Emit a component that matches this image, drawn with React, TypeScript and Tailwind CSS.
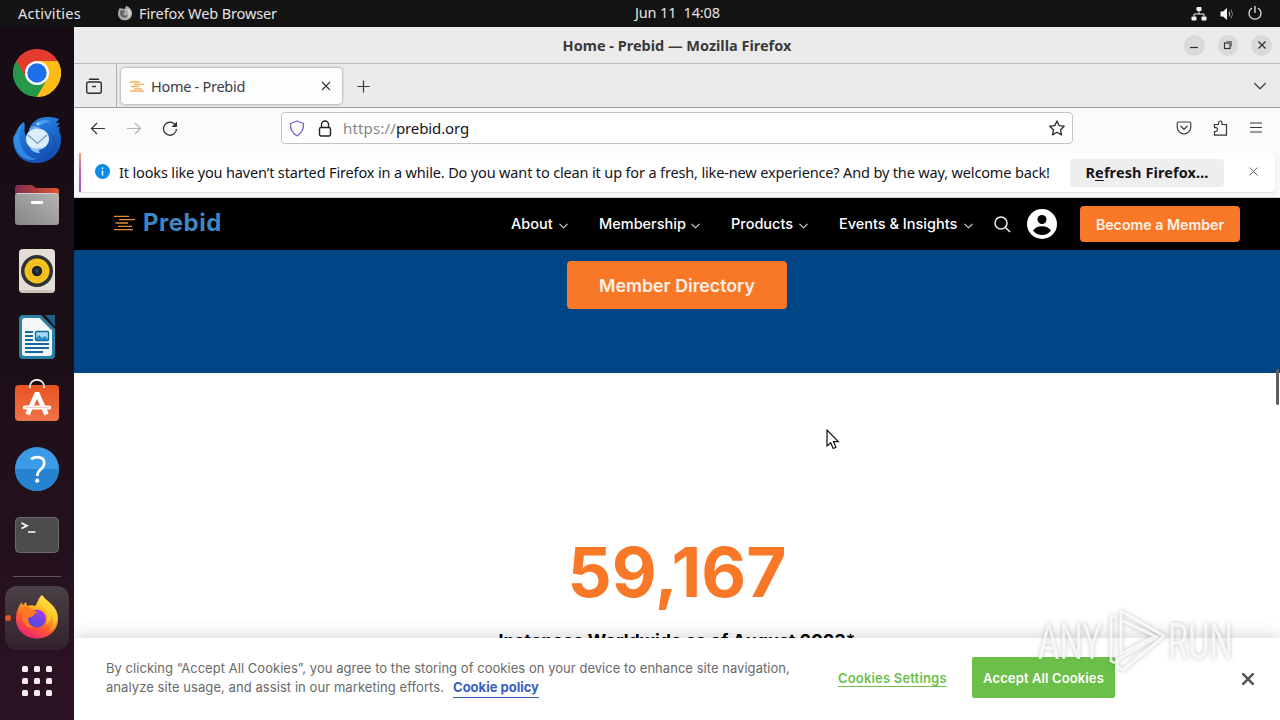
import React from 'react'

const UI_FONT = "font-['Noto_Sans',sans-serif]"

function ChromeIcon() {
    return (
        <svg width="48" height="48" viewBox="0 0 48 48">
            <path d="M24 24 L3.2 12 A24 24 0 0 1 44.8 12 Z" fill="#e33b2e" />
            <path d="M24 24 L44.8 12 A24 24 0 0 1 24 48 Z" fill="#fdbd16" />
            <path d="M24 24 L24 48 A24 24 0 0 1 3.2 12 Z" fill="#279847" />
            <path d="M24 12 H44.8 L34.4 30 Z" fill="#fdbd16" />
            <path d="M34.4 30 L24 48 L13.6 30 Z" fill="#279847" />
            <path d="M13.6 30 L3.2 12 L24 12 Z" fill="#e33b2e" />
            <path d="M3.2 12 L13.6 30 L12 34 L0.6 24 Z" fill="#279847" />
            <path d="M34.4 30 L24 48 L32 47 L42 36 L46 24 Z" fill="#fdbd16" />
            <circle cx="24" cy="24" r="12" fill="#fff" />
            <circle cx="24" cy="24" r="9.7" fill="#1b6fe8" />
        </svg>
    )
}

function ThunderbirdIcon() {
    return (
        <svg className="mt-px" width="48" height="48" viewBox="0 0 48 48">
            <defs>
                <linearGradient id="tbBody" x1="0" y1="0" x2="0.5" y2="1">
                    <stop offset="0" stopColor="#2d8ff0" />
                    <stop offset="1" stopColor="#1350b4" />
                </linearGradient>
            </defs>
            <path d="M11 6 C5 10 5 15 4 17 C2 18 1 20 0 22 C0 37 9 47 23 47 C38 47 48 37 48 23 C48 20 47 17 46 14 L47 11 L44 11 L47 7 L43 7 L46 3 C40 0 27 0 22 5 C18 8 17 11 16 14 L13 20 C10 15 13 11 11 6 Z" fill="url(#tbBody)" />
            <path d="M11 6 C6 12 5 22 8 30 C11 38 17 42 24 43 C16 46 5 42 2 30 C-1 19 5 10 11 6 Z" fill="#3b9cf2" opacity="0.65" />
            <path d="M36 17 C42 22 42 32 35 38 C32 41 28 42 24 42 C35 44 43 37 43 26 C42 21 39 17 36 17Z" fill="#0e459f" opacity="0.3" />
            <path d="M22 8 C27 3 34 3 38 6 C32 6 29 9 26 10 Z" fill="#61b5fa" opacity="0.6" />
            <path d="M16 14 C19 8 24 10 27 12 L18 17 Z" fill="#6fa9ea" />
            <ellipse cx="24.500" cy="23" rx="11.500" ry="10.500" fill="#d9eefc" />
            <path d="M15 19 L24.500 27.500 L34 19" fill="none" stroke="#7d99b5" strokeWidth="1.300" />
            <path d="M17 31 C22 34 27 32 29 31 C26 34 25 35 27 37 C22 37 18 35 17 31Z" fill="#8fc1ee" />
            <circle cx="25" cy="8" r="1.200" fill="#bfe2ff" />
        </svg>
    )
}

function FilesIcon() {
    return (
        <svg width="48" height="48" viewBox="0 0 48 48">
            <defs>
                <linearGradient id="flTab" x1="0" x2="1">
                    <stop offset="0" stopColor="#7c2d4d" />
                    <stop offset="1" stopColor="#e5532a" />
                </linearGradient>
                <linearGradient id="flBody" x1="0" y1="1" x2="1" y2="0">
                    <stop offset="0" stopColor="#858585" />
                    <stop offset="1" stopColor="#b5b5b5" />
                </linearGradient>
            </defs>
            <path d="M5 4 H18 Q20 4 21 5.500 Q22 7 24 7 H43 Q46 7 46 10 V24 H2 V7 Q2 4 5 4Z" fill="url(#flTab)" />
            <rect x="2" y="12" width="44" height="32" rx="3" fill="url(#flBody)" />
            <path d="M4 12.500 H44" stroke="#cfcfcf" strokeWidth="1" />
            <rect x="18" y="20" width="12" height="3" rx="1" fill="#fff" />
        </svg>
    )
}

function MusicIcon() {
    return (
        <svg width="48" height="48" viewBox="0 0 48 48">
            <rect x="6" y="2" width="36" height="44" rx="4" fill="#e4dfd6" />
            <path d="M7 43 Q8 46 11 46 H37 Q40 46 41 43" fill="#c9c3b8" />
            <circle cx="24" cy="24" r="16" fill="#303234" />
            <circle cx="24" cy="24" r="12.500" fill="#f5c320" />
            <circle cx="24" cy="24" r="8" fill="none" stroke="#e0ac16" strokeWidth="0.800" />
            <circle cx="24" cy="24" r="5.200" fill="#1c2430" />
            <circle cx="24" cy="24" r="2" fill="#313c4c" />
        </svg>
    )
}

function WriterIcon() {
    return (
        <svg width="48" height="48" viewBox="0 0 48 48">
            <path d="M10 2 H28 L42 16 V42 Q42 46 38 46 H10 Q6 46 6 42 V6 Q6 2 10 2Z" fill="#2a7fa5" />
            <path d="M32 2 H42 V14 Z" fill="#1c5f86" />
            <path d="M11 5 H26.500 L39 17.500 V40 Q39 43 36 43 H12 Q9 43 9 40 V7 Q9 5 11 5Z" fill="#f3f8fb" />
            <g stroke="#16679b" strokeWidth="1.800">
                <path d="M12 19 H20 M12 23 H20 M12 27 H20 M12 31 H36 M12 35 H36 M12 39 H30" />
            </g>
            <rect x="22.500" y="18.500" width="13" height="9" rx="1" fill="#a8daf5" stroke="#16679b" strokeWidth="1.400" />
            <path d="M23 27 V25 L26 22 L29 25 L32 23 L35 26 V27Z" fill="#2b8ec8" />
        </svg>
    )
}

function SoftwareIcon() {
    return (
        <svg width="48" height="48" viewBox="0 0 48 48">
            <defs>
                <linearGradient id="swBag" x1="0" y1="0" x2="0" y2="1">
                    <stop offset="0" stopColor="#e95420" />
                    <stop offset="1" stopColor="#ee7348" />
                </linearGradient>
            </defs>
            <rect x="2" y="6" width="44" height="36" rx="4" fill="url(#swBag)" />
            <path d="M17 9 V7 A7 6.200 0 0 1 31 7 V9" fill="none" stroke="#f5ede8" strokeWidth="1.800" />
            <path d="M14.500 35.500 L24 14 L33.500 35.500" fill="none" stroke="#fff" strokeWidth="4.600" strokeLinejoin="bevel" />
            <rect x="10" y="26.500" width="28" height="4" rx="1.500" fill="#fff" />
            <path d="M12 28.500 H36" stroke="#f4b9a0" strokeWidth="0.700" />
        </svg>
    )
}

function HelpIcon() {
    return (
        <svg width="48" height="48" viewBox="0 0 48 48">
            <circle cx="24" cy="24" r="22" fill="#3b9be6" />
            <path d="M2 24 A22 22 0 0 0 46 24Z" fill="#2583cf" />
            <path d="M18 14.200 Q21 12 25 12.200 Q31.200 12.700 31.200 18 Q31.200 21.300 28 24 Q24.500 26.700 24.300 31" fill="none" stroke="#fff" strokeWidth="2.700" />
            <circle cx="24.200" cy="35.700" r="2.100" fill="#fff" />
        </svg>
    )
}

function TerminalIcon() {
    return (
        <svg width="48" height="48" viewBox="0 0 48 48">
            <rect x="2.500" y="6.500" width="43" height="35" rx="4" fill="#4c4c4c" stroke="#6a6a6a" />
            <path d="M8.500 12 L14 14.700 L8.500 17.500" fill="none" stroke="#fff" strokeWidth="1.700" />
            <path d="M15 21 H22.500" stroke="#fff" strokeWidth="1.500" />
        </svg>
    )
}

function FirefoxIcon() {
    return (
        <svg className="mb-[3px]" width="48" height="48" viewBox="0 0 48 48">
            <defs>
                <linearGradient id="ffBody" x1="0.800" y1="0.050" x2="0.300" y2="1">
                    <stop offset="0" stopColor="#fff04a" />
                    <stop offset="0.350" stopColor="#ffb41f" />
                    <stop offset="0.650" stopColor="#ff5a2a" />
                    <stop offset="1" stopColor="#e8217a" />
                </linearGradient>
                <linearGradient id="ffGlobe" x1="0.700" y1="0" x2="0.300" y2="1">
                    <stop offset="0" stopColor="#a43be8" />
                    <stop offset="1" stopColor="#4b4be0" />
                </linearGradient>
            </defs>
            <path d="M29 2 C31 5 34 7 36 9 C42 14 45 19 45 26 C45 37 36 45.500 24 45.500 C12 45.500 3 37 3 26 C3 19 5 14 9 9 L9.500 12.500 C11 11 12.500 9.500 13 9 L14 13 C17 12 20 12 22 13 C24 12 25 5 29 2Z" fill="url(#ffBody)" />
            <circle cx="24" cy="25.500" r="9" fill="url(#ffGlobe)" />
            <path d="M10 14 C14 13 17 15 19 17 L24 18.500 C24 20 21 21 20 23 C20 24 18 24 16 24 C13 27 16 34 22 35 C12 36 7 28 10 14Z" fill="#ff7a22" />
            <path d="M28 12 C35 17 36 25 33 31 C38 29 39 23 38 19 C42 25 41 35 34 40 C46 34 46 22 40 14 C36 10 32 8 30 4 C28 6 27 9 28 12Z" fill="#ffd83a" opacity="0.550" />
        </svg>
    )
}

const DOCK = [ChromeIcon, ThunderbirdIcon, FilesIcon, MusicIcon, WriterIcon, SoftwareIcon, HelpIcon, TerminalIcon]

function Dock() {
    return (
        <div className="flex w-[74px] shrink-0 flex-col items-center bg-linear-to-b from-[#170c14] via-[#1d0f18] to-[#2c1324] pt-[13px]">
            {DOCK.map((Icon, i) => (
                <div key={i} className="flex h-[66px] shrink-0 items-center">
                    <Icon />
                </div>
            ))}
            <div className="mt-2 h-px w-12 shrink-0 bg-[#5d5259]" />
            <div className="relative mt-[9px] flex h-16 w-16 shrink-0 items-center justify-center rounded-xl bg-linear-to-b from-[#4a4145] to-[#33222d]">
                <span className="absolute top-[29px] left-0 h-[6px] w-[6px] rounded-full bg-[#e95420]" />
                <FirefoxIcon />
            </div>
            <div className="mt-4 grid grid-cols-3 gap-[6px]">
                {Array.from({ length: 9 }).map((_, i) => (
                    <span key={i} className="h-[6px] w-[6px] rounded-[1.5px] bg-[#f6edf3]" />
                ))}
            </div>
        </div>
    )
}

function TopBar() {
    return (
        <div className={`flex h-[27px] shrink-0 items-center bg-[#131313] text-[14.5px] text-[#e4e4e4] ${UI_FONT}`}>
            <div className="flex w-[635px] shrink-0 items-center pl-[18px]">
                <span className="w-[99px] tracking-[0.25px] whitespace-nowrap">Activities</span>
                <svg className="mb-px" width="16" height="16" viewBox="0 0 48 48">
                    <path d="M29 2 C42 10 46 18 45 26 C45 37 36 46 24 46 C12 46 3 37 3 26 C3 19 5 12 9 8 L13 11 C17 10 20 11 22 13 C24 12 25 5 29 2Z" fill="#a9a9a9" />
                    <path d="M11 14 L25 18 C14 27 22 36 34 30 C30 42 9 40 9 24Z" fill="#666" />
                    <path d="M28 14 C38 20 38 32 28 40 C44 34 45 21 34 12Z" fill="#dedede" />
                </svg>
                <span className="ml-[6px] tracking-[-0.12px] whitespace-nowrap">Firefox Web Browser</span>
            </div>
            <span className="w-[87px] pb-px tracking-[-0.15px] whitespace-pre">Jun 11  14:08</span>
            <div className="flex flex-1 items-center justify-end gap-3 pr-[17px]">
                <svg width="16" height="16" viewBox="0 0 16 16" fill="#f2f2f2">
                    <rect x="5.500" y="1" width="5" height="4" rx="0.800" />
                    <rect x="0.500" y="10.500" width="5" height="4" rx="0.800" />
                    <rect x="10.500" y="10.500" width="5" height="4" rx="0.800" />
                    <path d="M8 5 V8 M3 10.500 V8 H13 V10.500" fill="none" stroke="#f2f2f2" />
                </svg>
                <svg width="16" height="16" viewBox="0 0 16 16">
                    <path d="M1.500 5.500 H4 L8 2 V14 L4 10.500 H1.500Z" fill="#f2f2f2" />
                    <path d="M10 5.500 Q11.500 8 10 10.500" fill="none" stroke="#d0d0d0" />
                    <path d="M12 3.500 Q15 8 12 12.500" fill="none" stroke="#858585" />
                </svg>
                <svg className="mb-px" width="16" height="16" viewBox="0 0 16 16" fill="none" stroke="#e6e6e6" strokeWidth="1.300">
                    <path d="M5 3 A6 6 0 1 0 11 3 M8 1 V8" />
                </svg>
            </div>
        </div>
    )
}

function TitleBar() {
    return (
        <div className={`flex h-[37px] shrink-0 items-center border-b border-[#bcbcbc] bg-[#ebebeb] ${UI_FONT}`}>
            <div className="w-[96px]" />
            <span className="flex-1 pt-[2px] text-center text-[14.5px] font-bold text-[#3a3a3a]">Home - Prebid — Mozilla Firefox</span>
            <div className="flex w-[96px] items-center justify-end gap-[13px] pr-[8px]">
                <span className="flex h-[21px] w-[21px] items-center justify-center rounded-full bg-[#dadada]">
                    <svg width="16" height="16" viewBox="0 0 16 16"><path d="M4 10.500 H12" stroke="#333" strokeWidth="1.200" /></svg>
                </span>
                <span className="flex h-[21px] w-[21px] items-center justify-center rounded-full bg-[#dadada]">
                    <svg width="16" height="16" viewBox="0 0 16 16" fill="none" stroke="#333"><rect x="4.500" y="6" width="5.500" height="5.500" strokeWidth="1.200" /><path d="M6.500 4.500 H11.500 V9.500" strokeWidth="0.900" stroke="#666" /></svg>
                </span>
                <span className="flex h-[21px] w-[21px] items-center justify-center rounded-full bg-[#dadada]">
                    <svg width="16" height="16" viewBox="0 0 16 16"><path d="M4.500 4.500 L11.500 11.500 M11.500 4.500 L4.500 11.500" stroke="#333" strokeWidth="1.400" /></svg>
                </span>
            </div>
        </div>
    )
}

function TabBar() {
    return (
        <div className={`flex h-[44px] shrink-0 items-center border-b border-[#9c9c9c] bg-[#ebebeb] ${UI_FONT}`}>
            <div className="flex h-full w-[43px] items-center justify-center border-r border-[#b0b0b0] pr-[2px]">
                <svg width="16" height="16" viewBox="0 0 16 16" fill="none" stroke="#2b2b33" strokeWidth="1.400">
                    <path d="M3.500 1.200 H12.500" strokeLinecap="round" />
                    <rect x="0.700" y="4" width="14.600" height="11.300" rx="2" />
                    <path d="M6 8.500 H10" />
                </svg>
            </div>
            <div className="ml-[4px] flex h-[36px] w-[221px] items-center rounded bg-[#fdfdfd] pt-px shadow-[0_0_3px_rgba(0,0,0,0.45)]">
                <svg className="ml-[9px]" width="14" height="11" viewBox="0 0 14 11" fill="none" stroke="#f7ae5e" strokeWidth="1.300">
                    <path d="M0 1 H10 M4 3.300 H14 M1 5.500 H9 M4 7.800 H12 M0 10 H14" />
                </svg>
                <span className="ml-[7px] flex-1 pt-px text-[14.5px] tracking-[-0.28px] text-[#3c3c44]">Home - Prebid</span>
                <svg className="mr-[11px]" width="10" height="10" viewBox="0 0 10 10"><path d="M1 1 L9 9 M9 1 L1 9" stroke="#33333b" strokeWidth="1.100" /></svg>
            </div>
            <svg className="mt-[2px] ml-[15px]" width="13" height="13" viewBox="0 0 13 13"><path d="M6.500 0.500 V12.500 M0.500 6.500 H12.500" stroke="#33333b" strokeWidth="1.200" /></svg>
            <div className="flex-1" />
            <svg className="mr-[13px]" width="14" height="8" viewBox="0 0 14 8" fill="none"><path d="M1.200 1 L7 6.800 L12.800 1" stroke="#44444b" strokeWidth="1.300" /></svg>
        </div>
    )
}

function Toolbar() {
    return (
        <div className={`flex h-[45px] shrink-0 items-center bg-[#fbfbfb] pb-[5px] ${UI_FONT}`}>
            <div className="flex w-[207px] items-center gap-[20px] pl-[16px]">
                <svg width="16" height="16" viewBox="0 0 16 16" fill="none" stroke="#33333b" strokeWidth="1.200"><path d="M15 8.500 H1.500 M7 3 L1.500 8.500 L7 14" /></svg>
                <svg width="16" height="16" viewBox="0 0 16 16" fill="none" stroke="#b4b4b8" strokeWidth="1.200"><path d="M1 8.500 H14.500 M9 3 L14.500 8.500 L9 14" /></svg>
                <svg width="16" height="16" viewBox="0 0 16 16" fill="none" stroke="#33333b" strokeWidth="1.300"><path d="M14.500 9 A6.500 6.500 0 1 1 12.700 4.200 L14 5.500" /><path d="M15 1.500 V7 H9.500Z" fill="#33333b" stroke="none" /></svg>
            </div>
            <div className="flex h-[32px] w-[792px] items-center rounded border border-[#c4c4c6] bg-white">
                <svg className="ml-[7px]" width="16" height="17" viewBox="0 0 16 17" fill="none" stroke="#6c62cf" strokeWidth="1.200"><path d="M8 1 L14.600 3.500 Q14.800 12 8 16 Q1.200 12 1.400 3.500Z" strokeLinejoin="round" /></svg>
                <svg className="ml-[13px]" width="14" height="17" viewBox="0 0 14 17" fill="none" stroke="#22222a" strokeWidth="1.400"><rect x="1.500" y="7.500" width="11" height="8.500" rx="1.500" /><path d="M3.500 7.500 V4.500 A3.500 3.500 0 0 1 10.500 4.500 V7.500" /></svg>
                <span className="ml-[11px] flex-1 text-[15px] tracking-[0.15px] text-[#86868b]">https://<span className="tracking-[-0.1px] text-[#15141a]">prebid.org</span></span>
                <svg className="mr-[7px]" width="16" height="16" viewBox="0 0 16 16" fill="none" stroke="#2b2b33" strokeWidth="1.300" strokeLinejoin="round"><path d="M8 1 L10.200 5.600 L15.200 6.200 L11.500 9.700 L12.500 14.900 L8 12.300 L3.500 14.900 L4.500 9.700 L0.800 6.200 L5.800 5.600Z" /></svg>
            </div>
            <div className="flex flex-1 items-center justify-end gap-[20px] pr-[16px]">
                <svg width="16" height="16" viewBox="0 0 16 16" fill="none" stroke="#44444b" strokeWidth="1.200"><path d="M1.200 3.500 Q1.200 2 2.700 2 H13.300 Q14.800 2 14.800 3.500 V7 A6.800 6.800 0 0 1 1.200 7Z" /><path d="M4.500 6 L8 9.300 L11.500 6" strokeWidth="1.400" /></svg>
                <svg width="16" height="16" viewBox="0 0 16 16" fill="none" stroke="#33333b" strokeWidth="1.200" strokeLinejoin="round"><path d="M2.500 15.200 V11.500 H4 Q5.500 11.300 5.500 9.500 Q5.500 7.700 4 7.700 H2.500 V4.500 H6.500 V3 Q6.700 1 8.300 1 Q10 1 10 3 V4.500 H14.500 V15.200Z" /></svg>
                <svg width="16" height="16" viewBox="0 0 16 16" stroke="#33333b" strokeWidth="1.200"><path d="M2 3 H14 M2 7.500 H14 M2 12 H14" /></svg>
            </div>
        </div>
    )
}

function RefreshNotice() {
    return (
        <div className={`h-[45px] shrink-0 border-b border-[#cfcfcf] bg-[#f8f8f8] pr-[5px] pl-[5px] ${UI_FONT}`}>
            <div className="flex h-[39px] items-center rounded bg-white shadow-[0_1px_2px_rgba(0,0,0,0.12)]">
                <div className="h-full w-[2px] bg-linear-to-b from-[#f5a468] via-[#c65bb0] to-[#9059d8]" />
                <svg className="mb-[3px] ml-[14px]" width="15" height="15" viewBox="0 0 15 15"><circle cx="7.500" cy="7.500" r="7.500" fill="#0a8ce8" /><path d="M7.500 6.500 V11.500" stroke="#fff" strokeWidth="1.500" /><circle cx="7.500" cy="4.200" r="0.900" fill="#fff" /></svg>
                <span className="ml-[9px] w-[951px] text-[14.5px] tracking-[-0.15px] whitespace-nowrap text-[#15141a]">It looks like you haven’t started Firefox in a while. Do you want to clean it up for a fresh, like-new experience? And by the way, welcome back!</span>
                <div className="flex h-[28px] w-[154px] items-center justify-center rounded bg-[#eeeeee] text-[14.5px] font-bold tracking-[0.1px] whitespace-nowrap text-[#15141a]">
                    <span>R<span className="underline underline-offset-2">e</span>fresh Firefox…</span>
                </div>
                <svg className="mb-[3px] ml-[25px]" width="9" height="9" viewBox="0 0 9 9"><path d="M0.500 0.500 L8.500 8.500 M8.500 0.500 L0.500 8.500" stroke="#66666c" strokeWidth="1" /></svg>
            </div>
        </div>
    )
}

function NavItem({ label, className }: { label: string, className: string }) {
    return (
        <div className={`flex items-center justify-between ${className}`}>
            <span className="text-[14.5px] font-medium whitespace-nowrap text-white">{label}</span>
            <svg className="mt-[3px]" width="9" height="6" viewBox="0 0 9 6" fill="none"><path d="M0.500 0.800 L4.500 4.800 L8.500 0.800" stroke="#ddd" strokeWidth="1.100" /></svg>
        </div>
    )
}

function SiteNav() {
    return (
        <div className="flex h-[52px] items-center bg-black pr-[40px] pl-[40px]">
            <svg className="mb-[3px]" width="21" height="16" viewBox="0 0 21 16" fill="none" stroke="#d98f3a" strokeWidth="1.300">
                <path d="M0 1.300 H15 M5 4.600 H21 M1.500 8 H14 M4 11.300 H18 M0 14.600 H19" />
            </svg>
            <span className="mb-[2px] ml-[8px] w-[368px] font-['Inter',sans-serif] text-[24px] leading-none font-bold tracking-[0.5px] text-[#3d87c3]">Prebid</span>
            <NavItem label="About" className="w-[57px]" />
            <NavItem label="Membership" className="ml-[31px] w-[101px]" />
            <NavItem label="Products" className="ml-[31px] w-[77px]" />
            <NavItem label="Events & Insights" className="ml-[31px] w-[134px]" />
            <svg className="ml-[21px]" width="17" height="17" viewBox="0 0 17 17" fill="none" stroke="#f2f2f2" strokeWidth="1.500"><circle cx="7" cy="7" r="6" /><path d="M11.500 11.500 L16 16" /></svg>
            <svg className="ml-[16px]" width="30" height="30" viewBox="0 0 30 30"><circle cx="15" cy="15" r="15" fill="#fff" /><circle cx="15" cy="10.500" r="4.500" fill="#000" /><path d="M6 21.500 Q9 17.200 15 17.200 Q21 17.200 24 21.500 Q20.500 26 15 26 Q9.500 26 6 21.500Z" fill="#000" /></svg>
            <div className="ml-auto flex h-[36px] w-[160px] items-center justify-center rounded bg-[#f87828] pt-[2px] text-[14.2px] font-semibold whitespace-nowrap text-[#fdf1e6]">Become a Member</div>
        </div>
    )
}

function CookieBanner() {
    return (
        <div className="absolute inset-x-0 bottom-0 flex h-[82px] items-center bg-white pb-[3px] pl-[32px] shadow-[0_0_18px_rgba(0,0,0,0.2)]">
            <div className="w-[732px] pt-[2px] text-[13px] leading-[19px] tracking-[0.038px] text-[#696969]">
                <p className="whitespace-nowrap">By clicking “Accept All Cookies”, you agree to the storing of cookies on your device to enhance site navigation,</p>
                <p className="whitespace-nowrap">
                    <span className="tracking-[0.07px]">analyze site usage, and assist in our marketing efforts.</span>
                    <span className="ml-[9px] inline-block border-b border-[#3860be] font-bold tracking-normal text-[#3860be]">Cookie policy</span>
                </p>
            </div>
            <span className="w-[134px] pt-[2px] text-[13px] font-semibold tracking-[0.18px] whitespace-nowrap text-[#6cc04a] underline underline-offset-[3px]">Cookies Settings</span>
            <div className="flex h-[41px] w-[143px] items-center justify-center rounded-[2px] bg-[#6cc04a] pt-[2px] text-[13px] font-semibold tracking-[0.12px] whitespace-nowrap text-white">Accept All Cookies</div>
            <svg className="mt-[2px] ml-[127px]" width="12" height="12" viewBox="0 0 12 12"><path d="M1.200 1.200 L10.800 10.800 M10.800 1.200 L1.200 10.800" stroke="#565656" strokeWidth="2.600" strokeLinecap="round" /></svg>
        </div>
    )
}

function Watermark() {
    return (
        <svg className="pointer-events-none absolute right-[31px] bottom-[46px] overflow-visible drop-shadow-[0_0_2px_rgba(0,0,0,0.3)]" width="214" height="68" viewBox="0 0 214 68">
            <g fill="#fff" fillOpacity="0.750" fontFamily="Roboto, sans-serif" fontSize="50">
                <text x="3" y="53" textLength="64" lengthAdjust="spacingAndGlyphs">ANY</text>
                <text x="133" y="53" textLength="65" lengthAdjust="spacingAndGlyphs">RUN</text>
            </g>
            <g fill="none" stroke="#fff" strokeOpacity="0.800" strokeWidth="3" strokeLinejoin="round">
                <path d="M86 5 L129 30 L88 64 L82 61 V54 L124 30 M86 5 V48 L120 30 L88 15" />
                <path d="M82 12 L76 10 V55 L80 57" />
            </g>
        </svg>
    )
}

function Page() {
    return (
        <div className="relative flex-1 overflow-hidden bg-white font-['Inter',sans-serif]">
            <SiteNav />
            <div className="flex h-[123px] justify-center bg-[#004585] pt-[11px]">
                <div className="flex h-[48px] w-[220px] items-center justify-center rounded bg-[#f87828] pt-[2px] text-[17.8px] font-semibold text-[#fdf1e6]">Member Directory</div>
            </div>
            <div className="flex flex-col items-center pt-[157px]">
                <span className="text-[69.2px] leading-[84px] font-bold text-[#f87828]">59,167</span>
                <span className="mt-[15px] text-[17.8px] leading-[24px] font-bold text-black">Instances Worldwide as of August 2023*</span>
            </div>
            <div className="absolute top-[171px] right-px h-[36px] w-[3px] rounded-full bg-[#5f5f5f]" />
            <CookieBanner />
            <Watermark />
            <svg className="absolute top-[231px] left-[752px]" width="14" height="22" viewBox="0 0 14 22">
                <path d="M1 1 V17 L4.700 13.700 L7.200 19.500 L10 18.300 L7.500 12.700 H12.300Z" fill="#fff" stroke="#111" strokeWidth="1.200" />
            </svg>
        </div>
    )
}

export default function App() {
    return (
        <div className="flex h-[720px] w-[1280px] flex-col overflow-hidden">
            <TopBar />
            <div className="flex min-h-0 flex-1">
                <Dock />
                <div className="flex min-w-0 flex-1 flex-col">
                    <TitleBar />
                    <TabBar />
                    <Toolbar />
                    <RefreshNotice />
                    <Page />
                </div>
            </div>
        </div>
    )
}
